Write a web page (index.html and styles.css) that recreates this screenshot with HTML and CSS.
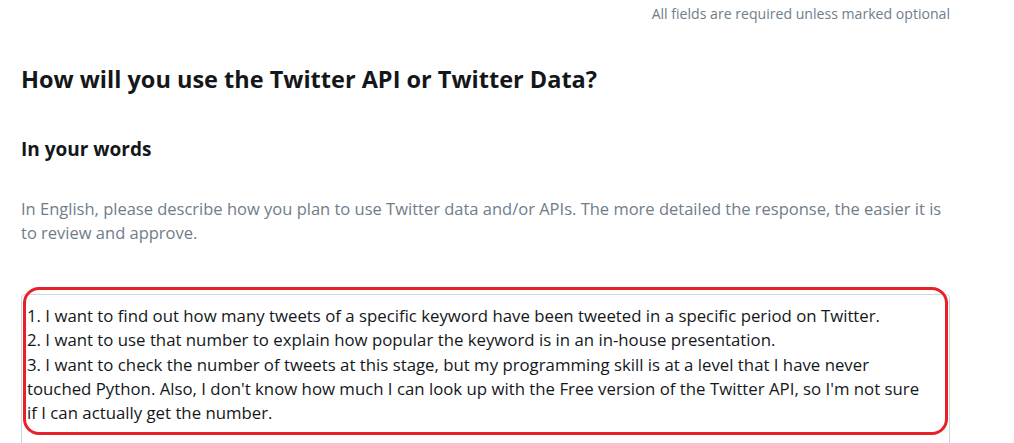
FILE: index.html
```html
<!DOCTYPE html>
<html lang="en">
<head>
<meta charset="utf-8">
<link rel="stylesheet" href="styles.css">
</head>
<body>
<main class="form">
  <p class="note">All fields are required unless marked optional</p>
  <h1 class="title">How will you use the Twitter API or Twitter Data?</h1>
  <h2 class="subtitle">In your words</h2>
  <p class="desc">In English, please describe how you plan to use Twitter data and/or APIs. The more detailed the response, the easier it is to review and approve.</p>
  <div class="field">
    <div class="textarea">1. I want to find out how many tweets of a specific keyword have been tweeted in a specific period on Twitter.<br>2. I want to use that number to explain how popular the keyword is in an in-house presentation.<br>3. I want to check the number of tweets at this stage, but my programming skill is at a level that I have never touched Python. Also, I don't know how much I can look up with the Free version of the Twitter API, so I'm not sure if I can actually get the number.</div>
    <div class="highlight"></div>
  </div>
</main>
</body>
</html>
```

FILE: styles.css
```css
html, body {
  margin: 0;
  padding: 0;
  background: #ffffff;
  overflow: hidden;
}
body {
  font-family: "Open Sans", "Noto Sans", sans-serif;
  color: #14171a;
}
.form {
  width: 929px;
  padding: 0 0 0 21px;
  display: flex;
  flex-direction: column;
}
.note {
  margin: 5px 0 0;
  align-self: flex-end;
  font-size: 14.1px;
  line-height: 18px;
  color: #707d8a;
}
.title {
  margin: 40px 0 0;
  font-size: 23.5px;
  line-height: 32px;
  font-weight: 700;
}
.subtitle {
  margin: 41px 0 0;
  font-size: 19px;
  line-height: 26px;
  font-weight: 700;
}
.desc {
  margin: 35px 0 0;
  font-size: 16.5px;
  line-height: 24px;
  color: #707d8a;
}
.field {
  position: relative;
  margin-top: 49px;
}
.textarea {
  border: 1px solid #ccd6dd;
  border-radius: 4px;
  padding: 9px 20px 40px 5px;
  font-size: 16.8px;
  line-height: 24.3px;
  color: #14171a;
}
.highlight {
  position: absolute;
  left: 2px;
  top: -7px;
  width: 925px;
  height: 148px;
  border: 3px solid #e8202a;
  border-radius: 16px;
  box-sizing: border-box;
}
```
